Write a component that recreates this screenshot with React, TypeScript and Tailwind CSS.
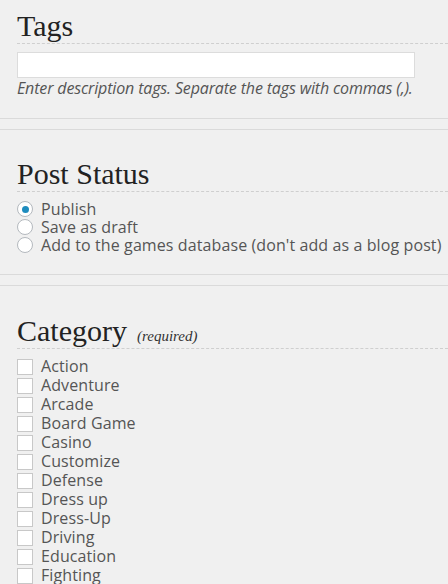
import { useState } from 'react';

const categories = [
    'Action',
    'Adventure',
    'Arcade',
    'Board Game',
    'Casino',
    'Customize',
    'Defense',
    'Dress up',
    'Dress-Up',
    'Driving',
    'Education',
    'Fighting'
];

const statuses = [
    { id: 'publish', label: 'Publish' },
    { id: 'draft', label: 'Save as draft' },
    { id: 'games', label: "Add to the games database (don't add as a blog post)" }
];

const Heading = ({ title, note }: { title: string; note?: string }) => (
    <h2 className="h-[35px] border-b border-dashed border-[#cfcfcf] font-['Liberation_Serif',serif] text-[30px] leading-[34px] text-[#222]">
        {title}
        {note && <span className="ml-[10px] text-[15px] italic text-[#333]">{note}</span>}
    </h2>
);

const Separator = () => (
    <div className="h-[12px] border-y border-[#dadada]" />
);

export default function App() {
    const [tags, setTags] = useState('');
    const [status, setStatus] = useState('publish');
    const [checked, setChecked] = useState<string[]>([]);

    const toggle = (name: string) => {
        setChecked((prev) => (prev.includes(name) ? prev.filter((c) => c !== name) : [...prev, name]));
    };

    return (
        <div className="h-[584px] overflow-hidden bg-[#f0f0f0] font-['Open_Sans',sans-serif] text-[#555]">
            {/* Tags */}
            <section className="pl-[17px] pt-[9px] pb-[20px]">
                <Heading title="Tags" />
                <input
                    type="text"
                    value={tags}
                    onChange={(e) => setTags(e.target.value)}
                    className="mt-[8px] block h-[26px] w-[398px] border border-[#dcdcdc] bg-white px-2 text-[14px] outline-none"
                />
                <p className="text-[16px] italic leading-[20px] tracking-[-0.15px] text-[#555]">
                    Enter description tags. Separate the tags with commas (,).
                </p>
            </section>

            <Separator />

            {/* Post Status */}
            <section className="pl-[17px] pt-[27px] pb-[20px]">
                <Heading title="Post Status" />
                <div className="mt-[8px] flex flex-col">
                    {statuses.map((s) => (
                        <label key={s.id} className="flex h-[18px] items-center gap-[8px] text-[16px] leading-[18px] tracking-[0.1px] whitespace-nowrap">
                            <span
                                onClick={() => setStatus(s.id)}
                                className="flex h-[16px] w-[16px] shrink-0 items-center justify-center rounded-full border border-[#b4b9be] bg-white"
                            >
                                {status === s.id && <span className="h-[7px] w-[7px] rounded-full bg-[#1e8cbe]" />}
                            </span>
                            {s.label}
                        </label>
                    ))}
                </div>
            </section>

            <Separator />

            {/* Category */}
            <section className="pl-[17px] pt-[28px]">
                <Heading title="Category" note="(required)" />
                <div className="mt-[8px] flex flex-col">
                    {categories.map((c) => (
                        <label key={c} className="flex h-[19px] items-center gap-[8px] text-[16px] leading-[19px] tracking-[0.1px] whitespace-nowrap">
                            <span
                                onClick={() => toggle(c)}
                                className="flex h-[16px] w-[16px] shrink-0 items-center justify-center border border-[#c8c8c8] bg-white text-[12px] text-[#1e8cbe]"
                            >
                                {checked.includes(c) && '✓'}
                            </span>
                            {c}
                        </label>
                    ))}
                </div>
            </section>
        </div>
    );
}
